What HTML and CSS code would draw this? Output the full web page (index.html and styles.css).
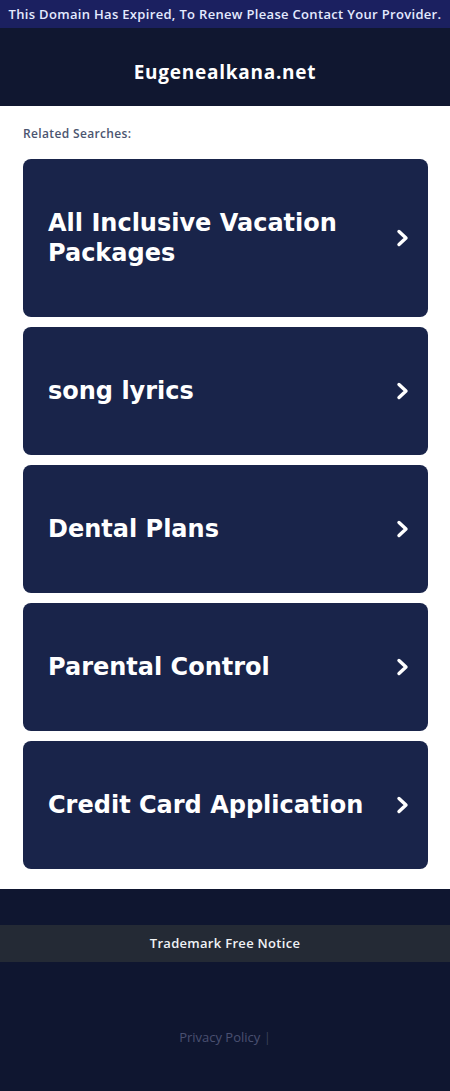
FILE: index.html
```html
<!DOCTYPE html>
<html lang="en">
<head>
  <meta charset="UTF-8">
  <meta name="viewport" content="width=device-width, initial-scale=1.0">
  <title>Eugenealkana.net</title>
  <link rel="stylesheet" href="styles.css">
</head>
<body>

  <div class="expired-bar">This Domain Has Expired, To Renew Please Contact Your Provider.</div>

  <div class="header">
    <h1>Eugenealkana.net</h1>
  </div>

  <div class="content">
    <div class="related-title">Related Searches:</div>
    <ul class="search-list">
      <li><a href="#" class="search-link tall"><span>All Inclusive Vacation Packages</span><svg class="chevron" viewBox="0 0 14 18" width="14" height="18"><path d="M3 2.5 L10 9 L3 15.5" fill="none" stroke="#fff" stroke-width="3.4" stroke-linecap="round" stroke-linejoin="round"/></svg></a></li>
      <li><a href="#" class="search-link"><span>song lyrics</span><svg class="chevron" viewBox="0 0 14 18" width="14" height="18"><path d="M3 2.5 L10 9 L3 15.5" fill="none" stroke="#fff" stroke-width="3.4" stroke-linecap="round" stroke-linejoin="round"/></svg></a></li>
      <li><a href="#" class="search-link"><span>Dental Plans</span><svg class="chevron" viewBox="0 0 14 18" width="14" height="18"><path d="M3 2.5 L10 9 L3 15.5" fill="none" stroke="#fff" stroke-width="3.4" stroke-linecap="round" stroke-linejoin="round"/></svg></a></li>
      <li><a href="#" class="search-link"><span>Parental Control</span><svg class="chevron" viewBox="0 0 14 18" width="14" height="18"><path d="M3 2.5 L10 9 L3 15.5" fill="none" stroke="#fff" stroke-width="3.4" stroke-linecap="round" stroke-linejoin="round"/></svg></a></li>
      <li><a href="#" class="search-link"><span>Credit Card Application</span><svg class="chevron" viewBox="0 0 14 18" width="14" height="18"><path d="M3 2.5 L10 9 L3 15.5" fill="none" stroke="#fff" stroke-width="3.4" stroke-linecap="round" stroke-linejoin="round"/></svg></a></li>
    </ul>
  </div>

  <div class="footer">
    <div class="trademark">Trademark Free Notice</div>
    <div class="footer-links">
      <a href="#">Privacy Policy</a> <span class="sep">|</span>
    </div>
  </div>

</body>
</html>
```

FILE: styles.css
```css
body {
  font-family: "Open Sans", Arial, sans-serif;
  margin: 0;
  padding: 0;
  background-color: #0f1630;
}

.expired-bar {
  background-color: #1b2060;
  color: #e4eaff;
  font-size: 13px;
  font-weight: 600;
  text-align: center;
  height: 28px;
  line-height: 28px;
  white-space: nowrap;
  letter-spacing: 0.32px;
}

.header {
  background-color: #101730;
  height: 78px;
  display: flex;
  justify-content: center;
  align-items: center;
}

.header h1 {
  margin: 0;
  color: #fff;
  font-size: 19px;
  font-weight: 700;
  padding-top: 10px;
  letter-spacing: 0.75px;
}

.content {
  background-color: #fff;
  padding: 20px 22px 20px 23px;
}

.related-title {
  color: #4b5570;
  font-size: 12px;
  font-weight: 600;
  line-height: 16px;
  margin-bottom: 17px;
  letter-spacing: 0.35px;
}

.search-list {
  list-style: none;
  margin: 0;
  padding: 0;
  display: flex;
  flex-direction: column;
  gap: 10px;
}

.search-link {
  display: flex;
  align-items: center;
  justify-content: space-between;
  background-color: #19244a;
  border-radius: 8px;
  height: 128px;
  padding: 0 18px 0 25px;
  box-sizing: border-box;
  color: #fff;
  text-decoration: none;
  font-family: "DejaVu Sans", sans-serif;
  font-weight: 700;
  font-size: 24px;
  line-height: 30px;
}

.search-link.tall {
  height: 158px;
}

.search-link span {
  padding-right: 20px;
}

.chevron {
  flex-shrink: 0;
}

.footer {
  padding-top: 36px;
  height: 166px;
}

.trademark {
  background-color: #242a35;
  color: #f0f2f5;
  text-align: center;
  font-size: 13px;
  font-weight: 600;
  height: 37px;
  line-height: 36px;
  letter-spacing: 0.3px;
}

.footer-links {
  text-align: center;
  margin-top: 66px;
  font-size: 13px;
  color: #3a4058;
}

.footer-links a {
  color: #4a5070;
  text-decoration: none;
}
```
